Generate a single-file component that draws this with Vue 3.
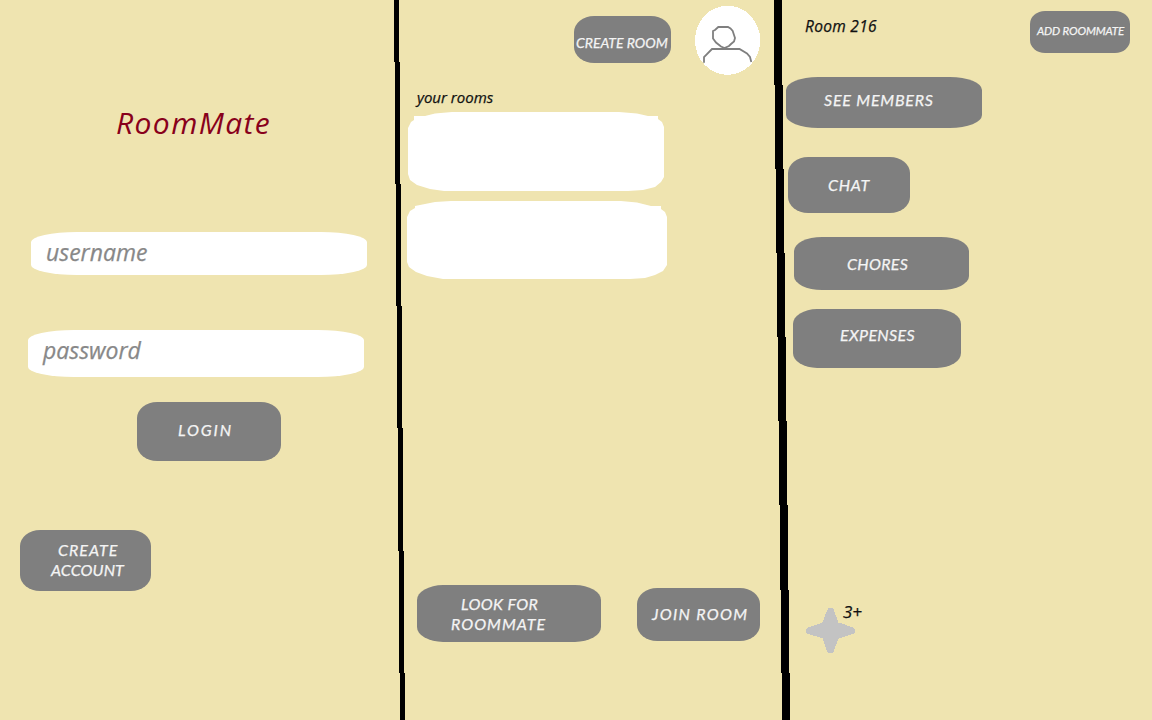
<script setup>
const actions = [
  { label: 'SEE MEMBERS', name: 'members' },
  { label: 'CHAT', name: 'chat' },
  { label: 'CHORES', name: 'chores' },
  { label: 'EXPENSES', name: 'expenses' },
]
</script>

<template>
  <main class="board">
    <section class="panel login-panel">
      <h1 class="title">RoomMate</h1>
      <div class="field username"><span>username</span></div>
      <div class="field password"><span>password</span></div>
      <button class="btn login"><span>LOGIN</span></button>
      <button class="btn account"><span class="l1">CREATE</span><span class="l2">ACCOUNT</span></button>
    </section>

    <section class="panel rooms-panel">
      <header class="top">
        <button class="btn create-room"><span>CREATE ROOM</span></button>
        <svg class="avatar" width="66" height="70" viewBox="695 5 66 70">
          <ellipse cx="727.600" cy="40.300" rx="32.600" ry="34.600" fill="#fff" shape-rendering="crispEdges" />
          <g fill="none" stroke="#7f7f7f" stroke-width="1.800">
            <path d="M718.300 27H728L730.500 28.500 732.700 31 734 35 735 38 734 41.500 731 44 729 46 724.500 48 721 46.500 716 42.500 713 38.500V31L715 30z" />
            <path d="M704 62.700V57L712 49H739.500L747 53.500 750 57 751.300 62" />
          </g>
        </svg>
      </header>
      <h2 class="heading">your rooms</h2>
      <div class="room first"></div>
      <div class="room second"></div>
      <footer class="bottom">
        <button class="btn look"><span class="l1">LOOK FOR</span><span class="l2">ROOMMATE</span></button>
        <button class="btn join"><span>JOIN ROOM</span></button>
      </footer>
    </section>

    <section class="panel detail-panel">
      <header class="room-top">
        <h2 class="room-name">Room 216</h2>
        <button class="btn add"><span>ADD ROOMMATE</span></button>
      </header>
      <button v-for="a in actions" :key="a.name" class="btn" :class="a.name"><span>{{ a.label }}</span></button>
      <div class="alerts">
        <svg width="50" height="46" viewBox="0 0 50 46">
          <path d="M22.500 0H27L28.500 4 30.500 9 32.500 14.500 40 17 47 19.500 49 21V25L47 26 40 28 32.500 30.500 30 37 28 43 26.500 45H22.500L21 43 19 37 16.500 30.500 9 28 2 26 0 24.500V21L2 19.500 9 17 16.500 14.500 18.500 9 20.500 4z" fill="#c3c3c3" shape-rendering="crispEdges" />
        </svg>
        <span class="count">3+</span>
      </div>
    </section>

    <svg class="dividers" width="1152" height="720" shape-rendering="crispEdges">
      <path d="M394 0H399L404.900 720H399.900z" />
      <path d="M773.500 0H781.500L790.070 720H782.070z" />
    </svg>
  </main>
</template>

<style>
body {
  margin: 0;
  background: #efe4b0;
}
</style>

<style scoped>
.board {
  position: relative;
  display: grid;
  grid-template-columns: 400px 380px 372px;
  width: 1152px;
  height: 720px;
  overflow: hidden;
  background: #efe4b0;
  color: #111;
  font-family: "Ink Free", "Open Sans", "Noto Sans", sans-serif;
  font-style: italic;
  -webkit-text-stroke: 0.25px currentColor;
}
.panel {
  display: flex;
  flex-direction: column;
  align-items: flex-start;
}
.dividers {
  position: absolute;
  inset: 0;
  pointer-events: none;
}
h1, h2 {
  margin: 0;
  font-weight: 400;
  white-space: nowrap;
}
.title {
  margin: 103px 0 0 116px;
  height: 40px;
  line-height: 40px;
  font-size: 30px;
  color: #88001b;
  letter-spacing: 1.4px;
  -webkit-text-stroke: 0;
}
.field {
  box-sizing: border-box;
  width: 336px;
  background: #fff;
  border-radius: 46px / 10px;
  color: #888;
  font-size: 23px;
  line-height: 26px;
}
.username {
  height: 43px;
  margin: 89px 0 0 31px;
  padding: 7px 0 0 15px;
}
.password {
  height: 47px;
  margin: 55px 0 0 28px;
  padding: 7px 0 0 15px;
}
.btn {
  box-sizing: border-box;
  display: flex;
  flex-direction: column;
  align-items: flex-start;
  flex: none;
  padding: 0;
  border: 0;
  border-radius: 20px / 16px;
  background: #7f7f7f;
  color: #f4f4f4;
  font-family: "Ink Free", Lato, "Noto Sans", sans-serif;
  font-style: italic;
  font-size: 16px;
  line-height: 20px;
  white-space: nowrap;
}
.login { width: 144px; height: 59px; margin: 25px 0 0 137px; padding: 18px 0 0 41px; letter-spacing: 1.9px; }
.account { width: 131px; height: 61px; margin: 69px 0 0 20px; padding: 10px 0 0 31px; letter-spacing: 0.1px; }
.account .l1 { margin-left: 7px; letter-spacing: 1px; }
.top { display: flex; height: 76px; }
.create-room { width: 97px; height: 47px; margin: 16px 0 0 174px; padding: 17px 0 0 2px; font-size: 14px; }
.avatar { margin: 5px 0 0 24px; }
.heading { margin: 11px 0 0 17px; height: 20px; font-size: 15px; line-height: 20px; }
.room { background: #fff; }
.first {
  width: 256px;
  height: 79px;
  margin: 5px 0 0 8px;
  clip-path: polygon(6px 4px, 17px 4px, 27px 1.5px, 44px 0, 211px 0, 229px 1.5px, 240px 4px, 250px 4px, 250px 7px, 254px 10px, 256px 15px, 256px 65px, 253px 70px, 247px 75px, 235px 78px, 220px 79px, 36px 79px, 22px 77px, 9px 73px, 2px 68px, 0 62px, 0 16px, 3px 10px, 6px 8px);
}
.second {
  width: 260px;
  height: 78px;
  margin: 10px 0 0 7px;
  clip-path: polygon(8px 5px, 18px 3px, 28px 1px, 44px 0, 214px 0, 230px 1.5px, 244px 5px, 254px 5px, 254px 8px, 258px 11px, 260px 16px, 260px 64px, 256px 70px, 248px 74px, 238px 77px, 223px 78px, 36px 78px, 20px 75px, 9px 71px, 2px 66px, 0 61px, 0 16px, 3px 10px, 8px 7px);
}
.bottom { display: flex; margin: 306px 0 0 17px; }
.look { width: 184px; height: 57px; border-radius: 26px / 15px; padding: 9px 0 0 34px; }
.look .l1 { margin-left: 10px; letter-spacing: 0.4px; }
.look .l2 { letter-spacing: 1px; }
.join { width: 123px; height: 53px; margin: 3px 0 0 36px; padding: 16px 0 0 15px; letter-spacing: 1.3px; }
.room-top { display: flex; height: 77px; }
.room-name { width: 225px; margin: 16px 0 0 25px; font-size: 15.5px; line-height: 20px; letter-spacing: 0.3px; }
.add { width: 100px; height: 42px; margin-top: 11px; border-radius: 15px / 13px; padding: 10px 0 0 7px; font-size: 11.5px; letter-spacing: -0.15px; }
.members { width: 196px; height: 51px; margin-left: 6px; padding: 13px 0 0 38px; border-radius: 32px / 13px; letter-spacing: 0.8px; }
.chat { width: 122px; height: 56px; margin: 29px 0 0 8px; padding: 18px 0 0 40px; letter-spacing: 0.7px; }
.chores { width: 175px; height: 53px; margin: 24px 0 0 14px; padding: 17px 0 0 53px; border-radius: 28px / 14px; letter-spacing: 0.3px; }
.expenses { width: 168px; height: 59px; margin: 19px 0 0 13px; padding: 16px 0 0 47px; border-radius: 24px / 15px; letter-spacing: 0.35px; }
.alerts { display: flex; align-items: flex-start; margin: 234px 0 0 26px; }
.alerts svg { margin-top: 6px; }
.count { margin-left: -13px; font-size: 17px; line-height: 20px; }
</style>
